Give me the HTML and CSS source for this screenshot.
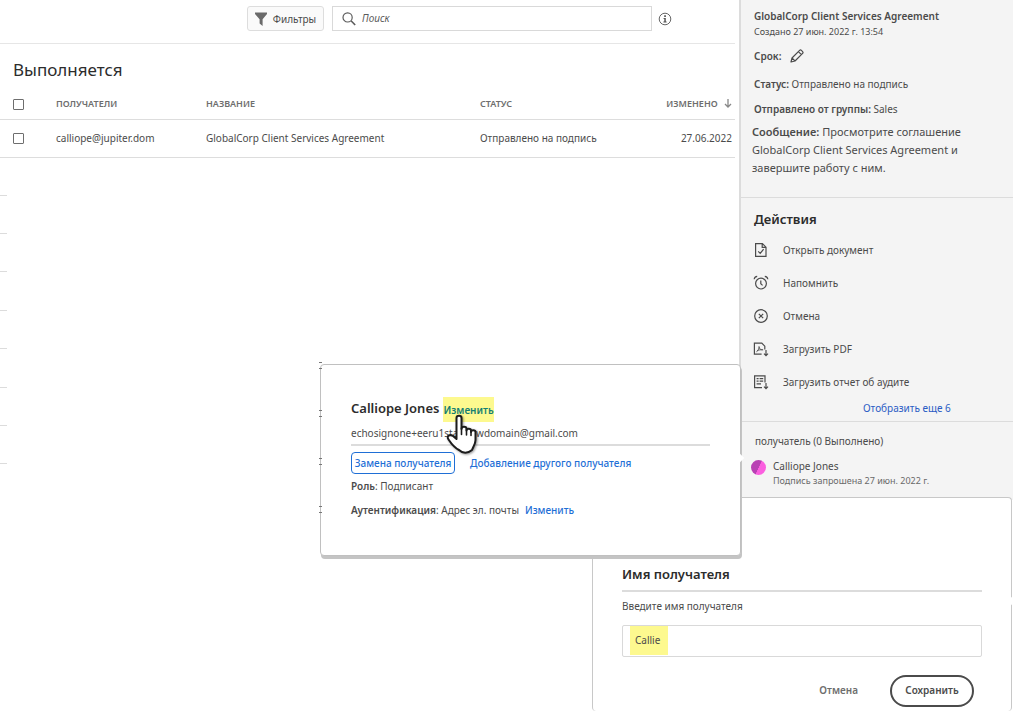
FILE: index.html
```html
<!DOCTYPE html>
<html lang="ru">
<head>
<meta charset="utf-8">
<title>Выполняется</title>
<link rel="stylesheet" href="styles.css">
</head>
<body>
<div class="app">
  <main class="main">
    <div class="toolbar">
      <button class="filter" type="button">
        <svg width="12" height="14" viewBox="0 0 12 14"><path d="M0 0.5h12v1.600L7.600 7.200V14L4.600 11.600V7.200L0 2.100z" fill="#6a6a6a"/></svg>
        Фильтры
      </button>
      <label class="search">
        <svg width="14" height="14" viewBox="0 0 14 14" fill="none" stroke="#5c5c5c" stroke-width="1.200"><circle cx="5.600" cy="5.400" r="4.600"/><path d="M9 8.800l4.200 4.200" stroke-width="1.600"/></svg>
        <input type="search" placeholder="Поиск" aria-label="Поиск">
      </label>
      <svg class="info" width="14" height="14" viewBox="0 0 14 14"><circle cx="7" cy="7" r="5.800" fill="none" stroke="#666"/><path d="M6.200 3.300h1.700v1.600H6.200zM5.600 6h2.200v3.600h.8v1H5.400v-1h.9V7h-.7z" fill="#555"/></svg>
    </div>
    <h1 class="title">Выполняется</h1>
    <table class="list">
      <thead>
        <tr>
          <th class="c-check"><input type="checkbox" aria-label="Выбрать все"></th>
          <th class="c-who">ПОЛУЧАТЕЛИ</th>
          <th class="c-name">НАЗВАНИЕ</th>
          <th class="c-status">СТАТУС</th>
          <th class="c-date">ИЗМЕНЕНО <svg class="sort" width="8" height="9" viewBox="0 0 8 9" fill="none" stroke="#888" stroke-width="1.300"><path d="M4 0v7.800M1 5l3 3 3-3"/></svg></th>
        </tr>
      </thead>
      <tbody>
        <tr>
          <td class="c-check"><input type="checkbox" aria-label="Выбрать GlobalCorp Client Services Agreement"></td>
          <td>calliope@jupiter.dom</td>
          <td>GlobalCorp Client Services Agreement</td>
          <td>Отправлено на подпись</td>
          <td class="c-date">27.06.2022</td>
        </tr>
      </tbody>
    </table>
    <div class="rules"><i></i><i></i><i></i><i></i><i></i><i></i><i></i><i></i></div>
  </main>

  <aside class="side">
    <section class="info-block">
      <h2 class="doc">GlobalCorp Client Services Agreement</h2>
      <p class="created">Создано 27 июн. 2022 г. 13:54</p>
      <p class="deadline"><b>Срок:</b>
        <svg width="14" height="14" viewBox="0 0 14 14" fill="none" stroke="#4b4b4b" stroke-width="1.200" stroke-linejoin="round"><path d="M1 13l1-4 7.600-7.600a1.300 1.300 0 0 1 1.800 0l1.200 1.200a1.300 1.300 0 0 1 0 1.800L5 12zM8.400 2.600l3 3M2 9l3 3"/></svg>
      </p>
      <p class="status"><b>Статус:</b> Отправлено на подпись</p>
      <p class="group"><b>Отправлено от группы:</b> Sales</p>
      <p class="message"><b>Сообщение:</b> Просмотрите соглашение GlobalCorp Client Services Agreement и завершите работу с ним.</p>
    </section>
    <section class="actions">
      <h2>Действия</h2>
      <ul>
        <li><button type="button"><svg width="16" height="16" viewBox="0 0 16 16"><path d="M2.600 1.600h6.800l3.600 3.600v9.200H2.600zM9.200 1.800v3.600H13M5.200 9.400l2 2 3.400-4.200"/></svg>Открыть документ</button></li>
        <li><button type="button"><svg width="16" height="16" viewBox="0 0 16 16"><circle cx="8" cy="8.600" r="5.400"/><path d="M7.800 5.600v3.200l1.800 1.600M1.200 4.200c.2-1.600 1.400-2.600 3-2.800M14.800 4.200c-.2-1.600-1.400-2.600-3-2.800"/></svg>Напомнить</button></li>
        <li><button type="button"><svg width="16" height="16" viewBox="0 0 16 16"><circle cx="8" cy="8" r="6.300"/><path d="M5.800 5.800l4.400 4.400M10.200 5.800l-4.400 4.400"/></svg>Отмена</button></li>
        <li><button type="button"><svg width="16" height="16" viewBox="0 0 16 16"><path d="M8.600 13.200H1.400V2.200h7.400l3 3v3.400M13 9v5.600M11 12.600l2 2 2-2"/><path stroke-width=".9" d="M3.400 10.800c1.600-1.200 3.200-3.600 2.600-5.600M6 6c.4 2 2 3 4.200 2.800M4 10c1.800-1.200 3.600-1.400 5.600-1.200"/></svg>Загрузить PDF</button></li>
        <li><button type="button"><svg width="16" height="16" viewBox="0 0 16 16"><path d="M9 13.600H1.600V1.800h10.400v6.800M13 9v5.600M11 12.600l2 2 2-2"/><path d="M3.600 4.600h2M6.600 4.600h3.600M3.600 7.200h2M6.600 7.200h3.600M3.600 9.800h4.400"/></svg>Загрузить отчет об аудите</button></li>
      </ul>
      <a class="more" href="#">Отобразить еще 6</a>
    </section>
    <section class="people">
      <h3>получатель (0 Выполнено)</h3>
      <div class="person">
        <span class="avatar"></span>
        <div><p class="pname">Calliope Jones</p><p class="pnote">Подпись запрошена 27 июн. 2022 г.</p></div>
      </div>
    </section>
  </aside>

  <form class="rename">
    <h2>Имя получателя</h2>
    <label for="rname">Введите имя получателя</label>
    <input id="rname" type="text" value="Callie">
    <div class="buttons">
      <button class="cancel" type="button">Отмена</button>
      <button class="save" type="button">Сохранить</button>
    </div>
    <span class="notch"></span>
  </form>

  <section class="card">
    <div class="who"><h2>Calliope Jones</h2><a class="edit" href="#">Изменить</a></div>
    <p class="mail">echosignone+eeru1stagnewdomain@gmail.com</p>
    <div class="choices">
      <button class="replace" type="button">Замена получателя</button>
      <a href="#">Добавление другого получателя</a>
    </div>
    <p class="role"><b>Роль</b>: Подписант</p>
    <p class="auth"><span><b>Аутентификация</b>: Адрес эл. почты</span><a href="#">Изменить</a></p>
    <span class="notch"></span>
    <div class="marks"><i></i><i></i><i></i><i></i></div>
    <svg class="hand" width="34" height="42" viewBox="0 0 34 42"><path d="M10.500 25V4C10.500 1 15.500 1 15.500 4V15c0-3 5-3 5 0v1.500c0-2.500 4.500-2.500 4.500 0V18c0-2.500 4.500-2.500 4.500 0v8c0 4-2 6-3.500 10-4 3.500-9.500 3.500-13 0C8 33.500 5.500 30 2.500 25.500 0 22 4 20 7 22z" fill="#fff" stroke="#1c1c1c" stroke-width="2" stroke-linejoin="round"/><path d="M15.500 14v6.500M20.500 15.500v5.500M25 17v4.500" stroke="#1c1c1c" stroke-width="1.600" stroke-linecap="round"/></svg>
  </section>
</div>
</body>
</html>
```

FILE: styles.css
```css
* { box-sizing: border-box; }
body, h1, h2, h3, p, ul { margin: 0; padding: 0; }
body {
  background: #fff;
  color: #4b4b4b;
  font: 10px/16px "Noto Sans", "Open Sans", sans-serif;
  overflow: hidden;
}
button, input { font: inherit; color: inherit; }
button { padding: 0; border: 0; background: none; cursor: pointer; white-space: nowrap; }
a { color: #1f6fd6; text-decoration: none; white-space: nowrap; }
b { font-weight: 600; }
h1, h2, h3, p { white-space: nowrap; }

.app { position: relative; display: flex; align-items: flex-start; min-height: 100vh; overflow: hidden; }
.main { flex: 1; min-width: 0; padding-right: 4px; }

.toolbar {
  display: flex;
  align-items: center;
  gap: 8px;
  padding: 6px 63px 12px 247px;
  border-bottom: 1px solid #e6e6e6;
}
.filter {
  display: flex;
  align-items: center;
  justify-content: center;
  gap: 6px;
  width: 77px;
  height: 25px;
  border: 1px solid #ddd;
  border-radius: 3px;
  background: #fafafa;
}
.search {
  flex: 1;
  display: flex;
  align-items: center;
  gap: 6px;
  height: 25px;
  padding-left: 9px;
  border: 1px solid #d9d9d9;
}
.search input { flex: 1; min-width: 0; padding: 0 0 2px; border: 0; outline: 0; font-style: italic; }
.search input::placeholder { color: #5a5a5a; opacity: 1; }
.info { margin-left: -2px; }

.title { padding: 14px 13px 9px; font-size: 17px; line-height: 24px; font-weight: 400; color: #2c2c2c; }

.list { width: 100%; border-collapse: collapse; table-layout: fixed; white-space: nowrap; }
.list th, .list td { padding: 0; text-align: left; border-bottom: 1px solid #ddd; }
.list th { height: 28px; padding-bottom: 1px; font-size: 9px; line-height: 12px; font-weight: 600; color: #6e6e6e; }
.list td { height: 38px; }
.list .c-check { width: 56px; padding-left: 13px; }
.list .c-who { width: 150px; }
.list .c-status { width: 150px; }
.list .c-name { width: 274px; }
.list .c-date { width: auto; padding-right: 3px; text-align: right; }
.list input { display: block; appearance: none; width: 11px; height: 11px; margin: 0; border: 1px solid #6e6e6e; border-radius: 1px; background: #fff; }
.sort { margin-left: 4px; vertical-align: -1px; }

.rules { display: flex; flex-direction: column; justify-content: space-between; width: 7px; height: 270px; margin-top: 37px; }
.rules i { height: 1px; background: #dcdcdc; }

.side { width: 274px; min-height: 500px; border-left: 2px solid #dcdcdc; background: #f4f4f4; }
.info-block { padding: 8px 13px 20px; border-bottom: 1px solid #dcdcdc; }
.doc { font-size: 10px; font-weight: 600; }
.created { font-size: 9px; }
.deadline { display: flex; align-items: center; gap: 9px; margin-top: 8px; }
.status { margin-top: 12px; }
.group { margin-top: 9px; }
.message { margin: 6px 0 0 -2px; font-size: 11px; line-height: 18px; white-space: normal; }

.actions { padding: 11px 13px 5px; border-bottom: 1px solid #dcdcdc; }
.actions h2 { font-size: 13px; line-height: 20px; font-weight: 600; color: #2c2c2c; }
.actions ul { list-style: none; padding: 4px 0 2px; }
.actions li { display: flex; height: 33px; }
.actions button { display: flex; align-items: center; gap: 14px; }
.actions button svg { margin-left: -1px; fill: none; stroke: #4b4b4b; stroke-width: 1.2; }
.more { display: block; padding-left: 109px; color: #2b5cc4; }

.people { padding: 11px 14px; }
.people h3 { font-size: 10px; font-weight: 400; }
.person { display: flex; align-items: flex-start; gap: 7px; margin: 9px 0 0 -4px; }
.avatar { width: 15px; height: 15px; margin-top: 2px; border-radius: 50%; background: linear-gradient(115deg, #b941b4 50%, #fb5fdf 52%); }
.pname { line-height: 16px; }
.pnote { font-size: 9px; line-height: 14px; color: #6a6a6a; }

.rename {
  position: absolute;
  top: 497px;
  right: 1px;
  width: 420px;
  height: 214px;
  padding: 66px 29px 0;
  border: 1px solid #c8c8c8;
  border-bottom: 0;
  border-radius: 4px;
  background: #fff;
}
.rename h2 { height: 28px; border-bottom: 2px solid #dcdcdc; font-size: 13px; line-height: 20px; font-weight: 600; color: #2c2c2c; }
.rename label { display: block; padding-top: 6px; }
.rename input {
  display: block;
  width: 100%;
  height: 32px;
  margin-top: 11px;
  padding: 0 12px 3px;
  border: 1px solid #d9d9d9;
  border-radius: 2px;
  background: linear-gradient(#fdf98f, #fdf98f) 7px 0 / 38px 29px no-repeat;
}
.buttons { display: flex; align-items: center; justify-content: flex-end; gap: 32px; margin: 18px 8px 0 0; }
.cancel { padding-bottom: 2px; color: #6e6e6e; font-weight: 600; }
.save { width: 84px; height: 32px; padding-bottom: 2px; border: 2px solid #4b4b4b; border-radius: 16px; font-weight: 600; }

.card {
  position: absolute;
  top: 364px;
  right: 272px;
  width: 421px;
  padding: 32px 30px 37px 30px;
  border: 1px solid #c0c0c0;
  border-radius: 4px;
  background: #fff;
  box-shadow: 1px 3px 0 #c4c4c4;
}
.who { display: flex; align-items: flex-start; gap: 4px; height: 25px; }
.who h2 { font-size: 13px; line-height: 23px; font-weight: 600; color: #2c2c2c; }
.edit { padding: 5px 0 4px; background: #fdf98f; color: #167f73; font-weight: 600; }
.mail { height: 24px; padding-top: 3px; border-bottom: 2px solid #dcdcdc; }
.choices { display: flex; align-items: center; gap: 15px; margin-top: 6px; font-weight: 500; }
.replace { width: 104px; height: 22px; border: 1px solid #1f6fd6; border-radius: 4px; color: #1f6fd6; }
.role { margin-top: 4px; }
.auth { display: flex; gap: 6px; margin-top: 8px; }
.auth a { font-weight: 500; }
.hand { position: absolute; left: 125px; top: 49px; filter: drop-shadow(1px 1px 1px #0006); }

.notch { position: absolute; right: -3px; top: 90px; width: 6px; height: 6px; background: #fff; transform: rotate(45deg); }
.rename .notch { top: 100px; }
.marks { position: absolute; left: -2px; top: -3px; display: grid; gap: 41px; }
.marks i { width: 2px; height: 7px; border: 1px dotted #777; border-width: 1px 0; }
```
